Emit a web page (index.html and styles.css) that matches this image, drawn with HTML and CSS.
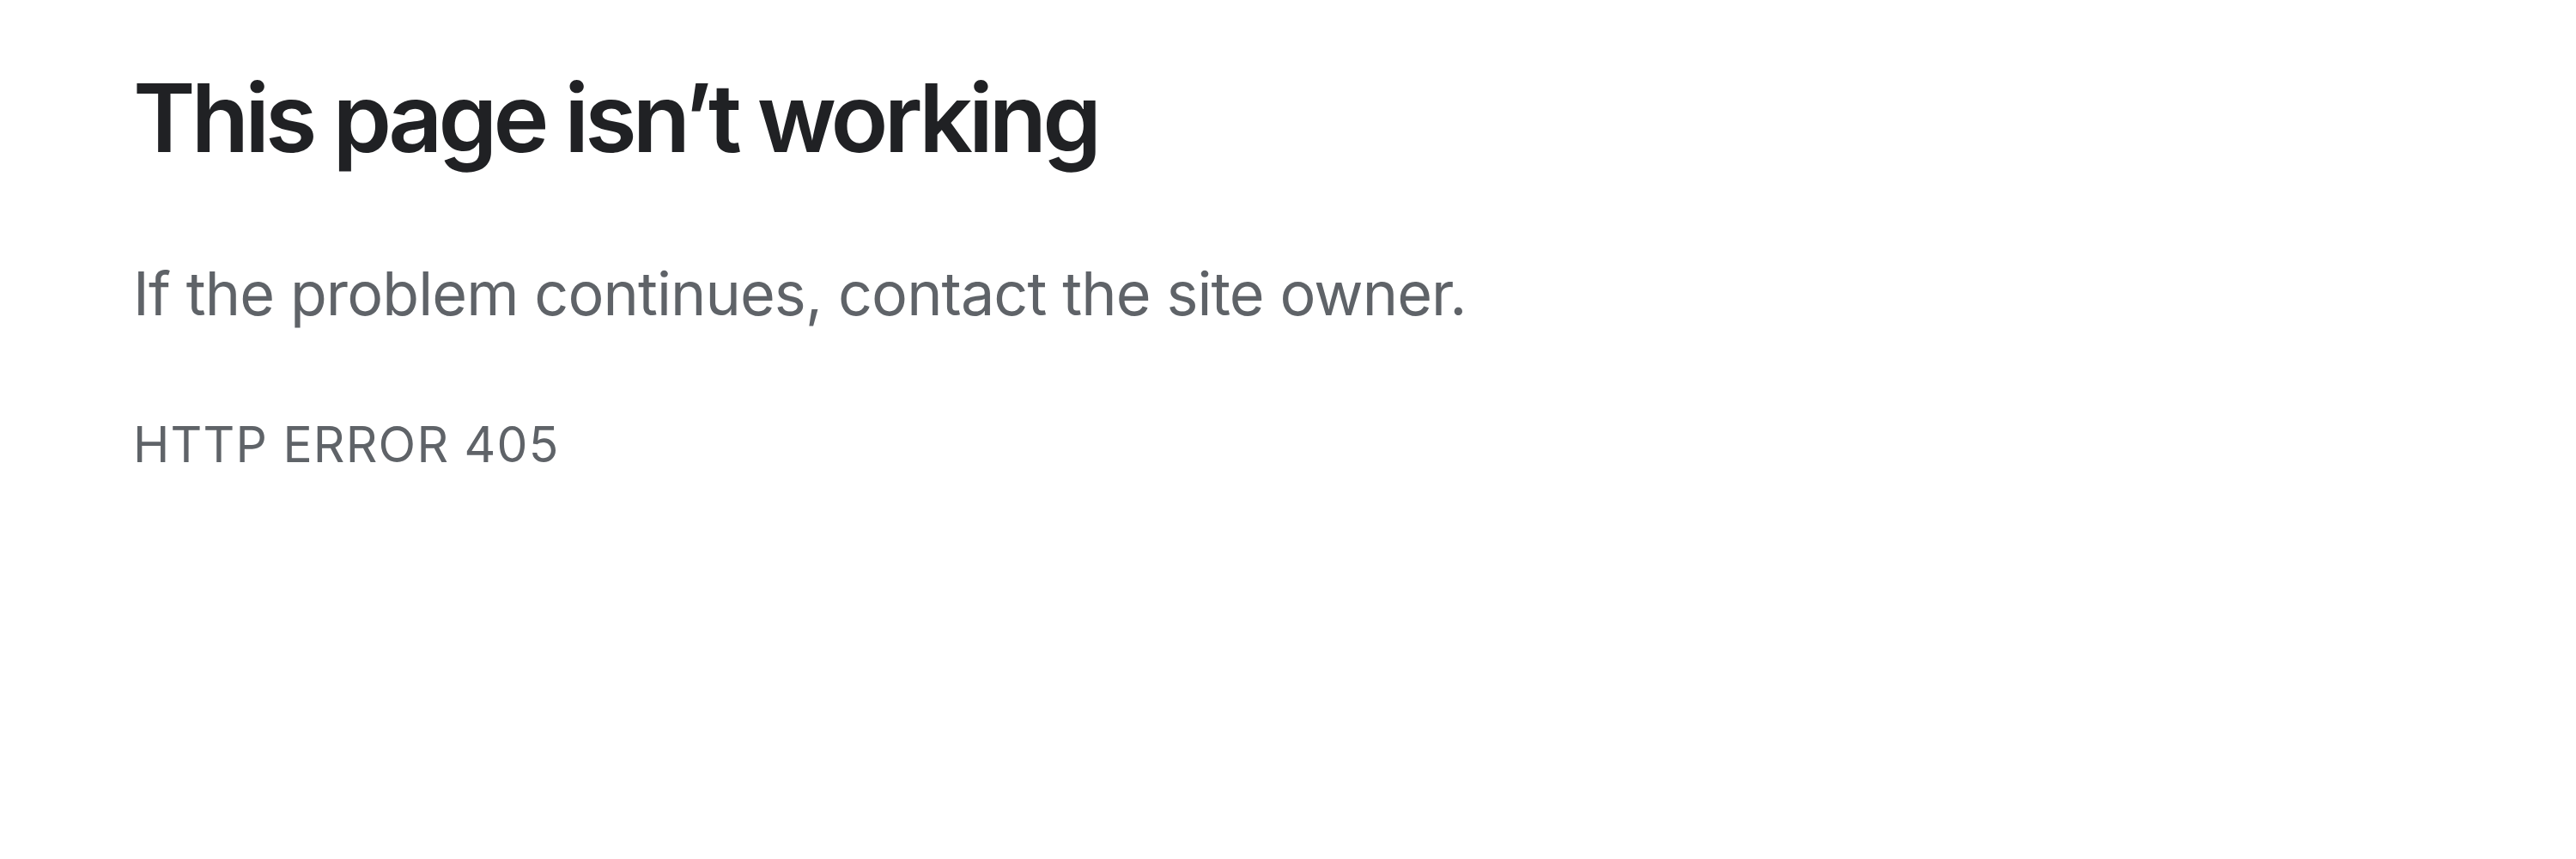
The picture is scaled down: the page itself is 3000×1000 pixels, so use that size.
FILE: index.html
```html
<!DOCTYPE html>
<html lang="en">
<head>
    <meta charset="UTF-8">
    <meta name="viewport" content="width=device-width, initial-scale=1.0">
    <title>This page isn't working</title>
    <link rel="stylesheet" href="styles.css">
</head>
<body>
    <!-- Error message -->
    <div class="error-page">
        <h1 class="error-title">This page isn’t working</h1>
        <p class="error-text">If the problem continues, contact the site owner.</p>
        <div class="error-code">HTTP ERROR 405</div>
    </div>
</body>
</html>
```

FILE: styles.css
```css
/* General Styling */
body {
    margin: 0;
    padding: 0;
    background: #ffffff;
    font-family: 'Inter', 'Roboto', sans-serif;
}

.error-page {
    display: flex;
    flex-direction: column;
    align-items: flex-start;
    padding: 71px 155px;
}

.error-title {
    margin: 0;
    font-size: 110px;
    line-height: 132px;
    font-weight: 600;
    letter-spacing: -4.9px;
    color: #202124;
}

.error-text {
    margin: 97px 0 0;
    font-size: 70px;
    line-height: 84px;
    letter-spacing: -0.9px;
    color: #5f6368;
}

.error-code {
    margin-top: 100px;
    font-size: 57px;
    line-height: 68px;
    letter-spacing: 1.2px;
    color: #5f6368;
    text-transform: uppercase;
}
```
